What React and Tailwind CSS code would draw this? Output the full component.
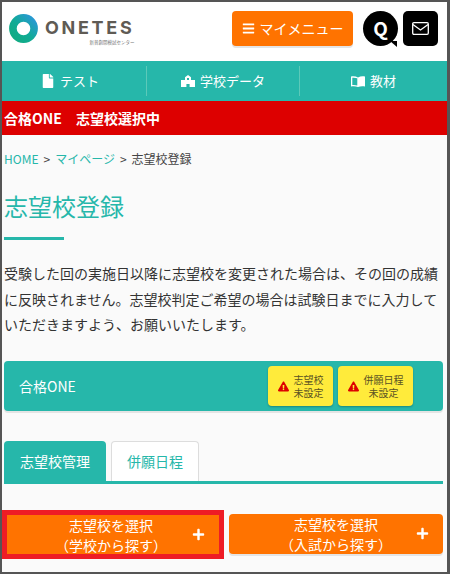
import React from "react";
import { FaFile, FaBars, FaPlus, FaExclamationTriangle } from "react-icons/fa";

const FONT = "font-['Noto_Sans_CJK_JP','Noto_Sans',sans-serif]";

const Notice = ({ lines, width }) => (
  <div className={`${width} h-10 rounded bg-[#ffeb3b] shadow-[0_1px_2px_rgba(0,0,0,0.25)] flex items-center justify-center gap-[5px] text-[10px] leading-[13.5px] text-[#5a5224] text-center`}>
    <FaExclamationTriangle className="text-[#dd0000] text-[11px] shrink-0" />
    <div>
      {lines.map((l) => (
        <div key={l}>{l}</div>
      ))}
    </div>
  </div>
);

const NavItem = ({ icon, label, className }) => (
  <div className={`h-[30px] flex items-center justify-center gap-[5px] text-[13px] text-white ${className}`}>
    {icon}
    <span>{label}</span>
  </div>
);

const SelectButton = ({ lines, className }) => (
  <button className={`relative h-10 bg-[#ff7300] text-white text-[14px] leading-[20px] text-center ${className}`}>
    {lines.map((l) => (
      <div key={l}>{l}</div>
    ))}
    <FaPlus className="absolute right-[14px] top-[13px] text-[13px]" />
  </button>
);

const LogoRing = () => (
  <svg width="29" height="29" viewBox="0 0 29 29" className="shrink-0">
    <defs>
      <linearGradient id="ring" x1="1" y1="0" x2="0" y2="1">
        <stop offset="0" stopColor="#2a98d6" />
        <stop offset="0.55" stopColor="#10ab95" />
        <stop offset="1" stopColor="#12ab82" />
      </linearGradient>
    </defs>
    <circle cx="14.5" cy="14.5" r="10.6" fill="none" stroke="url(#ring)" strokeWidth="7.6" />
  </svg>
);

const SchoolIcon = () => (
  <svg width="14" height="12" viewBox="0 0 14 12" fill="white">
    <path fillRule="evenodd" d="M4 2.2 7 0l3 2.2V5h4v7H8.6V9H5.400v3H0V5h4V2.200ZM6 3v2h2V3H6Z" />
  </svg>
);

const BookIcon = () => (
  <svg width="14" height="11" viewBox="0 0 14 11" fill="white">
    <path fillRule="evenodd" d="M0 0.5C2.5 0.1 5 0.3 7 1.4 9 0.3 11.500 0.100 14 0.500V10.500C11.500 10.100 9 10.200 7 11 5 10.200 2.500 10.100 0 10.500V0.500ZM1.300 1.700V9C3.200 8.800 4.800 9 6.300 9.500V2.300C4.800 1.700 3.200 1.500 1.300 1.700Z" />
  </svg>
);

const MailIcon = () => (
  <svg width="17" height="13" viewBox="0 0 17 13" fill="none" stroke="white" strokeWidth="1.300">
    <rect x="0.700" y="0.700" width="15.600" height="11.600" rx="1.200" />
    <path d="M0.900 2.500 8.500 8l7.600-5.500" />
  </svg>
);

export default function App() {
  return (
    <div className={`${FONT} w-[450px] h-[574px] box-border overflow-hidden border-2 border-r-[3px] border-[#555] bg-[#fafafa] text-[#333]`}>
      {/* header */}
      <header className="h-[59px] bg-white flex items-start pt-[9px] pl-[7px] pr-[9px]">
        <div className="w-[130px] flex items-start gap-[7px] mt-[3px]">
          <LogoRing />
          <div className="flex flex-col items-end pt-[3px]">
            <span className="text-[18px] leading-[22px] font-bold tracking-[2.7px] text-[#5f5b55] font-['Inter',sans-serif]">ONETES</span>
            <span className="text-[4.500px] leading-[7px] text-[#777]">新普創開模試センター</span>
          </div>
        </div>
        <div className="ml-auto flex items-center">
          <div className="w-[121px] h-[35px] rounded bg-[#ff7300] shadow-[0_2px_0_#e4e4e4] text-white text-[14px] flex items-center justify-center gap-[5px]">
            <FaBars className="text-[13px]" />
            <span>マイメニュー</span>
          </div>
          <div className="relative ml-[10px] w-[35px] h-[35px] rounded-full bg-black text-white text-[19px] font-bold flex items-center justify-center">
            Q
            <div className="absolute right-[1px] bottom-[-1px] w-0 h-0 border-l-[7px] border-l-transparent border-t-[6px] border-t-black" />
          </div>
          <div className="ml-[5px] w-[35px] h-[35px] rounded-[5px] bg-black flex items-center justify-center">
            <MailIcon />
          </div>
        </div>
      </header>

      {/* nav */}
      <nav className="h-10 bg-[#26b7aa] flex items-center">
        <NavItem icon={<FaFile className="text-[14px]" />} label="テスト" className="w-[145px] pr-[8px] border-r border-[#5cc9b9]" />
        <NavItem icon={<SchoolIcon />} label="学校データ" className="w-[153px] border-r border-[#5cc9b9]" />
        <NavItem icon={<BookIcon />} label="教材" className="flex-1" />
      </nav>

      {/* exam bar */}
      <div className="h-[34px] bg-[#dd0000] text-white font-bold text-[14px] flex items-center pl-[2px]">
        合格ONE　志望校選択中
      </div>

      <main className="px-[2px]">
        <p className="mt-[15px] text-[12px] leading-[18px] text-[#444]">
          <span className="text-[#26b7aa]">HOME</span>
          <span className="mx-[5px]">&gt;</span>
          <span className="text-[#26b7aa]">マイページ</span>
          <span className="mx-[5px]">&gt;</span>
          志望校登録
        </p>
        <h1 className="mt-[22px] text-[24px] leading-[32px] text-[#26b7aa]">志望校登録</h1>
        <div className="mt-[15px] w-[60px] h-[3px] bg-[#26b7aa]" />

        <p className="mt-[21px] text-[14px] leading-[25.5px] text-[#333] w-[440px]">
          受験した回の実施日以降に志望校を変更された場合は、その回の成績に反映されません。志望校判定ご希望の場合は試験日までに入力していただきますよう、お願いいたします。
        </p>

        {/* status */}
        <div className="mt-[23.500px] h-[50px] w-[439px] rounded bg-[#26b7aa] shadow-[0_2px_0_#e4e4e4] flex items-center pl-[15px] text-[14px] text-white">
          <span>合格ONE</span>
          <div className="ml-auto mr-[30px] flex gap-[5px]">
            <Notice lines={["志望校", "未設定"]} width="w-[65px]" />
            <Notice lines={["併願日程", "未設定"]} width="w-[75px]" />
          </div>
        </div>

        {/* tabs */}
        <div className="mt-[30px] w-[439px] h-[43px] border-b-[3px] border-[#26b7aa] flex items-end gap-[5px] text-[14px]">
          <div className="w-[102px] h-10 rounded-t bg-[#26b7aa] text-white flex items-center justify-center">志望校管理</div>
          <div className="w-[88px] h-10 rounded-t bg-white border border-b-0 border-[#ddd] text-[#26b7aa] flex items-center justify-center">併願日程</div>
        </div>

        {/* select buttons */}
        <div className="mt-[30px] w-[439px] flex gap-[5px] items-start">
          <div className="border-[5px] border-[#ee1c25] -ml-[2px] w-[222px] h-[49px] box-border mt-[-4px]">
            <SelectButton lines={["志望校を選択", "（学校から探す）"]} className="w-full h-full pr-[4px]" />
          </div>
          <SelectButton lines={["志望校を選択", "（入試から探す）"]} className="w-[214px] rounded shadow-[0_2px_0_#e4e4e4]" />
        </div>
      </main>
    </div>
  );
}
